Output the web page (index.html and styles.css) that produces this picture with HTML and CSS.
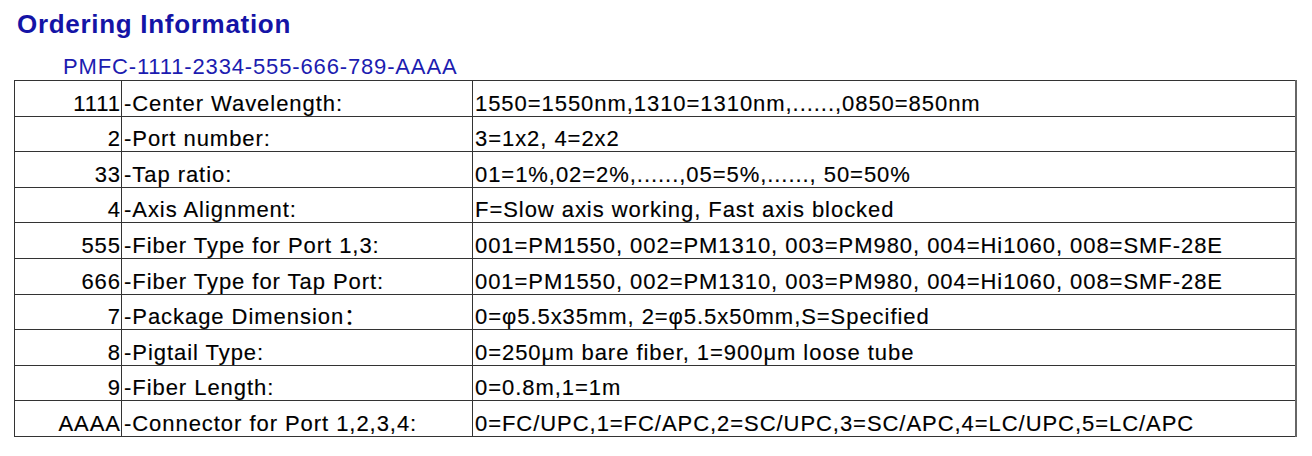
FILE: index.html
```html
<!DOCTYPE html>
<html>
<head>
<meta charset="utf-8">
<link rel="stylesheet" href="styles.css">
</head>
<body>
<div class="page">
  <h1 class="title">Ordering Information</h1>
  <div class="code">PMFC-1111-2334-555-666-789-AAAA</div>
  <table class="order">
    <tr><td class="key">1111</td><td class="name">-Center Wavelength:</td><td class="val">1550=1550nm,1310=1310nm,......,0850=850nm</td></tr>
    <tr><td class="key">2</td><td class="name">-Port number:</td><td class="val">3=1x2, 4=2x2</td></tr>
    <tr><td class="key">33</td><td class="name">-Tap ratio:</td><td class="val">01=1%,02=2%,......,05=5%,......, 50=50%</td></tr>
    <tr><td class="key">4</td><td class="name">-Axis Alignment:</td><td class="val">F=Slow axis working, Fast axis blocked</td></tr>
    <tr><td class="key">555</td><td class="name">-Fiber Type for Port 1,3:</td><td class="val">001=PM1550, 002=PM1310, 003=PM980, 004=Hi1060, 008=SMF-28E</td></tr>
    <tr><td class="key">666</td><td class="name">-Fiber Type for Tap Port:</td><td class="val">001=PM1550, 002=PM1310, 003=PM980, 004=Hi1060, 008=SMF-28E</td></tr>
    <tr><td class="key">7</td><td class="name">-Package Dimension：</td><td class="val">0=φ5.5x35mm, 2=φ5.5x50mm,S=Specified</td></tr>
    <tr><td class="key">8</td><td class="name">-Pigtail Type:</td><td class="val">0=250μm bare fiber, 1=900μm loose tube</td></tr>
    <tr><td class="key">9</td><td class="name">-Fiber Length:</td><td class="val">0=0.8m,1=1m</td></tr>
    <tr><td class="key">AAAA</td><td class="name">-Connector for Port 1,2,3,4:</td><td class="val">0=FC/UPC,1=FC/APC,2=SC/UPC,3=SC/APC,4=LC/UPC,5=LC/APC</td></tr>
  </table>
</div>
</body>
</html>
```
FILE: styles.css
```css
html, body {
  margin: 0;
  padding: 0;
  background: #ffffff;
}
body {
  font-family: "Liberation Sans", Arial, "Noto Sans CJK SC", sans-serif;
  color: #000;
}
.page {
  padding: 9px 0 0 14px;
}
.title {
  margin: 0 0 0 3px;
  font-size: 26px;
  line-height: 30px;
  font-weight: bold;
  letter-spacing: 0.7px;
  color: #1414a6;
}
.code {
  margin: 15px 0 0 49px;
  font-size: 22px;
  line-height: 25px;
  letter-spacing: 0.85px;
  color: #1c1cb0;
}
.order {
  margin-top: 1px;
  border-collapse: collapse;
  width: 1283px;
  table-layout: fixed;
  font-size: 22px;
  line-height: 25px;
  letter-spacing: 0.95px;
  -webkit-text-stroke: 0.15px #000;
}
.order td {
  border: 1px solid #333;
  height: 34.6px;
  padding: 0 0 0 2px;
  vertical-align: bottom;
  white-space: nowrap;
}
.order td.key {
  width: 106px;
  text-align: right;
  padding: 0;
}
.order td.name {
  width: 348px;
}
.order td.val {
  border-right: 2px solid #666;
}
```
